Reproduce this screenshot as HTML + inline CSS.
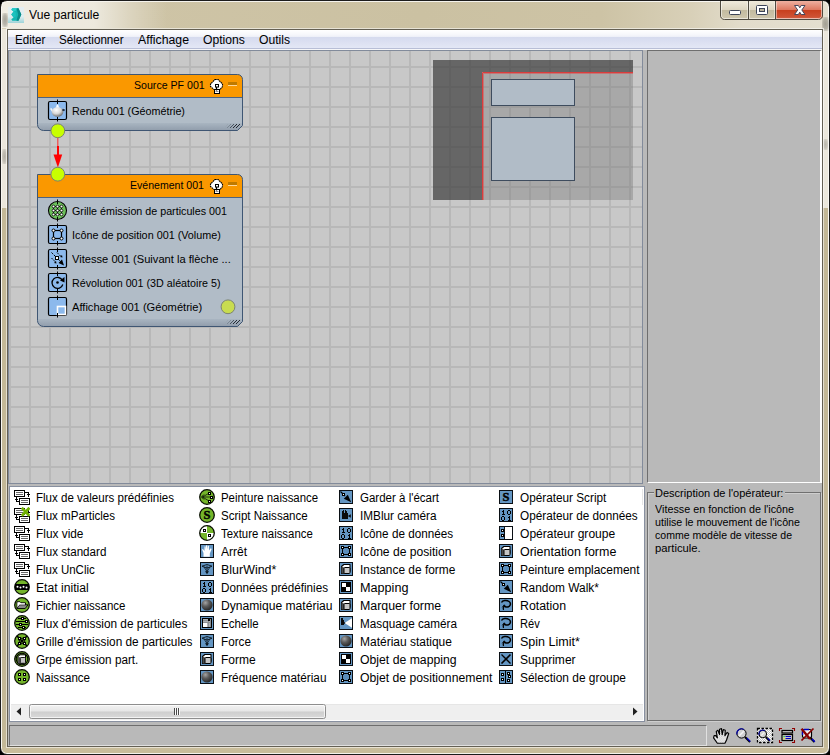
<!DOCTYPE html>
<html lang="fr">
<head>
<meta charset="utf-8">
<title>Vue particule</title>
<style>
html,body{margin:0;padding:0;background:#000;}
body{width:830px;height:755px;position:relative;overflow:hidden;font-family:"Liberation Sans",sans-serif;}
.abs,.t,.ic{position:absolute;}
.t{white-space:pre;line-height:1;transform-origin:0 50%;}
#win{position:absolute;left:0;top:0;width:828px;height:753px;border:1px solid #1c1c1c;border-radius:7px 7px 7px 7px;
 background:linear-gradient(90deg,#d9d1b8 0px,#cec4a6 130px,#cbc1a2 420px,#cdc3a5 600px,#d8d0b8 690px,#e2dccb 740px,#e4dfd0 830px);
 box-shadow:inset 0 0 0 1px rgba(255,255,255,.8);}
#glow{left:2px;top:2px;width:170px;height:26px;background:linear-gradient(90deg,rgba(255,255,255,.6) 0px,rgba(255,255,255,.6) 92px,rgba(255,255,255,.3) 125px,rgba(255,255,255,0) 165px);}
.smudge{background:radial-gradient(ellipse at center,rgba(120,118,108,.6) 0%,rgba(120,118,108,.45) 50%,rgba(120,118,108,0) 100%);}
/* side / bottom frame overlays */
#frL{left:2px;top:29px;width:5px;height:719px;background:linear-gradient(180deg,#ebe7dc 0px,#ebe7dc 179px,#c3b897 179px,#c3b897 100%);}
#frR{left:823px;top:29px;width:5px;height:719px;background:linear-gradient(180deg,#ebe7dc 0px,#ebe7dc 179px,#c3b897 179px,#c3b897 100%);}
#frB{left:2px;top:747px;width:826px;height:6px;background:#c9bd9b;border-radius:0 0 5px 5px;}
#client{left:6px;top:28px;width:816px;height:718px;border:1px solid rgba(255,255,255,.55);}
#client2{left:7px;top:29px;width:814px;height:716px;border:1px solid #646054;background:#b9b9b9;}
#menu{left:8px;top:30px;width:814px;height:20px;background:linear-gradient(180deg,#ffffff 0px,#f5f6fb 5px,#eceff8 7px,#d5daee 7px,#dde1f2 13px,#e3e7f5 18px,#b8bed6 18px,#b8bed6 19px,#f6f6f8 19px);}
#canvas{left:8px;top:50px;width:633px;height:432px;border:1px solid #828b9b;overflow:hidden;
 background-color:#c8c8c8;
 background-image:linear-gradient(90deg,#b8b8b8 2px,transparent 2px),linear-gradient(180deg,#b8b8b8 2px,transparent 2px);
 background-size:20px 20px,20px 20px;background-position:0px 0px,0px 15px;}
#rpanel{left:647px;top:50px;width:172px;height:431px;background:#b9b9b9;border-left:1px solid #6e6e6e;border-top:1px solid #6e6e6e;border-right:2px solid #fff;border-bottom:1px solid #fff;}
#list{left:9px;top:486px;width:634px;height:234px;background:#fff;border:1px solid #8890a0;}
#status{left:9px;top:725px;width:696px;height:19px;background:#b9b9b9;border-left:1px solid #6e6e6e;border-top:1px solid #6e6e6e;border-right:1px solid #e0e0e0;border-bottom:1px solid #e0e0e0;}
#gb1{left:647px;top:492px;width:172px;height:227px;border:1px solid #707070;}
#gb2{left:648px;top:493px;width:172px;height:227px;border:1px solid rgba(255,255,255,.3);}
#lline{left:642px;top:489px;width:1px;height:16px;background:#e6e6e6;}
#gbmask{left:654px;top:490px;width:131px;height:6px;background:#b9b9b9;}
</style>
</head>
<body>
<div id="win"></div>
<div id="glow" class="abs"></div>
<div id="frL" class="abs"></div><div id="frR" class="abs"></div><div id="frB" class="abs"></div>
<div class="abs smudge" style="left:2px;top:13px;width:6px;height:14px"></div><div class="abs smudge" style="left:822px;top:17px;width:7px;height:14px"></div><div class="abs smudge" style="left:2px;top:149px;width:5px;height:15px;opacity:.8"></div><div class="abs smudge" style="left:823px;top:139px;width:5px;height:11px;opacity:.7"></div>
<div id="client" class="abs"></div>
<div id="client2" class="abs"></div>
<div id="menu" class="abs"></div>
<div id="canvas" class="abs"></div>
<div id="rpanel" class="abs"></div>
<div id="list" class="abs"></div>
<div id="status" class="abs"></div><div id="lline" class="abs"></div>
<div id="gb2" class="abs"></div><div id="gb1" class="abs"></div><div id="gbmask" class="abs"></div>
<svg class="abs" style="left:0;top:0" width="830" height="755" viewBox="0 0 830 755"><defs><linearGradient id="band" x1="0" y1="0" x2="0" y2="1"><stop offset="0" stop-color="#a9b5c1"/><stop offset="1" stop-color="#8f9baa"/></linearGradient><radialGradient id="tea" cx="0.4" cy="0.3" r="0.7"><stop offset="0" stop-color="#ffffff"/><stop offset="0.55" stop-color="#d8d8d8"/><stop offset="1" stop-color="#707070"/></radialGradient></defs><path d="M433 60H633V72H482V200H433z" fill="rgba(58,58,58,0.69)"/><rect x="483" y="73" width="150" height="127" fill="rgba(120,120,120,0.40)"/><path d="M482.500 200V72.500H633" fill="none" stroke="#dc3c3c" stroke-width="1"/><path d="M483.500 200V73.500H633" fill="none" stroke="rgba(220,70,70,0.5)" stroke-width="1"/><rect x="491.5" y="79.5" width="83" height="26" fill="#b1bcc7" stroke="#3e4c5e"/><rect x="491.5" y="117.5" width="83" height="63" fill="#b1bcc7" stroke="#3e4c5e"/><clipPath id="cn1"><path d="M37.5 74.5H237.5A5 5 0 0 1 242.5 79.5V125.5L237.5 130.5H43.5A6 6 0 0 1 37.5 124.5Z"/></clipPath><g clip-path="url(#cn1)"><rect x="37" y="74" width="206" height="57" fill="#b1bcc7"/><rect x="37" y="74" width="206" height="23" fill="#fa9800"/><rect x="37" y="97" width="206" height="1" fill="#4d6380"/><rect x="37" y="123" width="206" height="8" fill="url(#band)"/></g><path d="M37.5 74.5H237.5A5 5 0 0 1 242.5 79.5V125.5L237.5 130.5H43.5A6 6 0 0 1 37.5 124.5Z" fill="none" stroke="#3f5673" stroke-width="1"/><path d="M224 128l4 -4" stroke="#9ca8b4" stroke-width="1"/><path d="M227 128l4 -4" stroke="#7c8894" stroke-width="1"/><path d="M230 128l4 -4" stroke="#4a5460" stroke-width="1"/><path d="M233 128l4 -4" stroke="#242a32" stroke-width="1"/><path d="M236 128l4 -4" stroke="#242a32" stroke-width="1"/><g transform="translate(216.5,85)"><path d="M-1.500 -5.500H1.500L6 -1V1.500L3.500 4.500H-2.500L-6 1.500V-1Z" fill="#fff" stroke="#000" stroke-width="1.100" stroke-dasharray="1.700 0.600" stroke-linejoin="round"/><rect x="-2" y="4.500" width="5" height="4" fill="#fff" stroke="#000" stroke-width="1"/><path d="M-1 6.500H2" stroke="#909090" stroke-width="1"/><rect x="-1" y="-0.500" width="3" height="2.500" fill="#fff" stroke="#000" stroke-width="1"/><path d="M0 2V5.500" stroke="#000" stroke-width="1.300"/></g><rect x="228" y="82" width="9" height="3" fill="#c07a00"/><rect x="228" y="85" width="9" height="1" fill="#ffd89a"/><clipPath id="cn2"><path d="M37.5 174.5H237.5A5 5 0 0 1 242.5 179.5V321.5L237.5 326.5H43.5A6 6 0 0 1 37.5 320.5Z"/></clipPath><g clip-path="url(#cn2)"><rect x="37" y="174" width="206" height="153" fill="#b1bcc7"/><rect x="37" y="174" width="206" height="23" fill="#fa9800"/><rect x="37" y="197" width="206" height="1" fill="#4d6380"/><rect x="37" y="319" width="206" height="8" fill="url(#band)"/></g><path d="M37.5 174.5H237.5A5 5 0 0 1 242.5 179.5V321.5L237.5 326.5H43.5A6 6 0 0 1 37.5 320.5Z" fill="none" stroke="#3f5673" stroke-width="1"/><path d="M224 324l4 -4" stroke="#9ca8b4" stroke-width="1"/><path d="M227 324l4 -4" stroke="#7c8894" stroke-width="1"/><path d="M230 324l4 -4" stroke="#4a5460" stroke-width="1"/><path d="M233 324l4 -4" stroke="#242a32" stroke-width="1"/><path d="M236 324l4 -4" stroke="#242a32" stroke-width="1"/><g transform="translate(216.5,185)"><path d="M-1.500 -5.500H1.500L6 -1V1.500L3.500 4.500H-2.500L-6 1.500V-1Z" fill="#fff" stroke="#000" stroke-width="1.100" stroke-dasharray="1.700 0.600" stroke-linejoin="round"/><rect x="-2" y="4.500" width="5" height="4" fill="#fff" stroke="#000" stroke-width="1"/><path d="M-1 6.500H2" stroke="#909090" stroke-width="1"/><rect x="-1" y="-0.500" width="3" height="2.500" fill="#fff" stroke="#000" stroke-width="1"/><path d="M0 2V5.500" stroke="#000" stroke-width="1.300"/></g><rect x="228" y="182" width="9" height="3" fill="#c07a00"/><rect x="228" y="185" width="9" height="1" fill="#ffd89a"/><rect x="57" y="137" width="1.500" height="11" fill="#e86060"/><rect x="57" y="146" width="2" height="10" fill="#ff0000"/><path d="M53.500 154.500H62.200L57.900 167.500z" fill="#ff0000"/><rect x="48.5" y="101.5" width="18" height="18" rx="1.500" fill="#8cb9ec" stroke="#000" stroke-width="1.200"/><g transform="translate(48,101)"><path d="M2.500 7.500C3.500 8 4 9.500 5 11M16.500 8C15 8 15 10 14 11" fill="none" stroke="#f4f4f4" stroke-width="1.600"/><ellipse cx="9.500" cy="11" rx="5.800" ry="4.800" fill="url(#tea)"/><path d="M7.500 6.500L9.500 4L11.500 6.500z" fill="#fff"/><circle cx="9.500" cy="4.500" r="1" fill="#fff"/><circle cx="15.500" cy="9" r="1.300" fill="#25364a"/></g><circle cx="57.5" cy="210.5" r="9" fill="#6cc05c" stroke="#000" stroke-width="1.100"/><path d="M53.5 206.5h8M53.5 210.5h8M53.5 214.5h8M53.5 206.5v8M57.5 206.5v8M61.5 206.5v8" stroke="#000" stroke-width="0.800" fill="none"/><g fill="#fff" stroke="#000" stroke-width="0.750"><circle cx="53.5" cy="206.5" r="1.350"/><circle cx="53.5" cy="210.5" r="1.350"/><circle cx="53.5" cy="214.5" r="1.350"/><circle cx="57.5" cy="206.5" r="1.350"/><circle cx="57.5" cy="210.5" r="1.350"/><circle cx="57.5" cy="214.5" r="1.350"/><circle cx="61.5" cy="206.5" r="1.350"/><circle cx="61.5" cy="210.5" r="1.350"/><circle cx="61.5" cy="214.5" r="1.350"/></g><rect x="48.5" y="225.5" width="18" height="18" rx="1.500" fill="#8cb9ec" stroke="#000" stroke-width="1.200"/><rect x="53.5" y="230.5" width="8" height="8" fill="none" stroke="#000" stroke-width="1.200"/><g fill="#fff" stroke="#000" stroke-width="1"><circle cx="53.5" cy="230.5" r="1.500"/><circle cx="53.5" cy="238.5" r="1.500"/><circle cx="61.5" cy="230.5" r="1.500"/><circle cx="61.5" cy="238.5" r="1.500"/></g><rect x="48.5" y="249.5" width="18" height="18" rx="1.500" fill="#8cb9ec" stroke="#000" stroke-width="1.200"/><g transform="translate(48,249)"><path d="M3.500 3.500L14 14M9 3.500L13 7.500M3.500 9L7.500 13" stroke="#000" stroke-width="1" stroke-dasharray="2 1.200" fill="none"/><path d="M16 16.500L10.500 14L14 10.500z" fill="#000"/><path d="M14.500 8.500l-2.500-.5 2-2zM8.500 14.500l-.5-2.500-2 2z" fill="#000"/><rect x="7.500" y="7.500" width="3" height="3" fill="#fff" stroke="#000" stroke-width="1"/></g><rect x="48.5" y="273.5" width="18" height="18" rx="1.500" fill="#8cb9ec" stroke="#000" stroke-width="1.200"/><g transform="translate(48,273)"><path d="M14.500 7.500A5.500 5.500 0 1 0 14.800 11.500" fill="none" stroke="#000" stroke-width="1.300"/><path d="M12 7.500L16.500 4V9.500z" fill="#000"/><circle cx="9.500" cy="9.500" r="1.300" fill="#000"/></g><rect x="48.5" y="297.5" width="18" height="18" rx="1.500" fill="#8cb9ec" stroke="#000" stroke-width="1.200"/><rect x="57.5" y="306.5" width="8" height="8" fill="none" stroke="#fff" stroke-width="1.600"/><path d="M57.5 99.5V104M57.5 117V121.5" stroke="#000" stroke-width="1"/><path d="M57.5 199.5V204M57.5 217V221.5" stroke="#000" stroke-width="1"/><path d="M57.5 223.5V228M57.5 241V245.5" stroke="#000" stroke-width="1"/><path d="M57.5 247.5V252M57.5 265V269.5" stroke="#000" stroke-width="1"/><path d="M57.5 271.5V276M57.5 289V293.5" stroke="#000" stroke-width="1"/><path d="M57.5 295.5V300M57.5 313V317.5" stroke="#000" stroke-width="1"/><circle cx="57.800" cy="130.800" r="6.900" fill="#c8ff00" stroke="#7c8470" stroke-width="1"/><circle cx="57.800" cy="174.200" r="6.900" fill="#c8ff00" stroke="#7c8470" stroke-width="1"/><circle cx="228" cy="306.800" r="6.900" fill="#c8dc50" stroke="#7c8470" stroke-width="1"/></svg><svg class="abs" style="left:0;top:0" width="830" height="755" viewBox="0 0 830 755"><defs><linearGradient id="btn" x1="0" y1="0" x2="0" y2="1"><stop offset="0" stop-color="#efeadc"/><stop offset="0.45" stop-color="#ddd6c2"/><stop offset="0.5" stop-color="#c3bba0"/><stop offset="1" stop-color="#d0c9b0"/></linearGradient><linearGradient id="cls" x1="0" y1="0" x2="0" y2="1"><stop offset="0" stop-color="#eeb0a0"/><stop offset="0.45" stop-color="#de7a62"/><stop offset="0.5" stop-color="#c8401f"/><stop offset="0.85" stop-color="#cf5335"/><stop offset="1" stop-color="#d98068"/></linearGradient><linearGradient id="appbg" x1="0" y1="0" x2="0" y2="1"><stop offset="0" stop-color="#e4eef2"/><stop offset="0.6" stop-color="#e0eef0"/><stop offset="1" stop-color="#9ed4d8"/></linearGradient><linearGradient id="thumb" x1="0" y1="0" x2="0" y2="1"><stop offset="0" stop-color="#f3f3f3"/><stop offset="0.48" stop-color="#e6e6e6"/><stop offset="0.52" stop-color="#cecece"/><stop offset="1" stop-color="#dadada"/></linearGradient><pattern id="dith" width="2" height="2" patternUnits="userSpaceOnUse"><rect width="2" height="2" fill="#fff"/><rect width="1" height="1" fill="#c0c0c0"/><rect x="1" y="1" width="1" height="1" fill="#c0c0c0"/></pattern><clipPath id="btnclip"><path d="M720 1H823V15A4 4 0 0 1 819 19H724A4 4 0 0 1 720 15Z"/></clipPath></defs><rect x="8" y="7" width="16" height="16" fill="url(#appbg)"/><path d="M12.300 8.200H18.500L21.300 14.500L18.500 20.800H12.300L11.300 19.300L13.600 17.500L11.300 14.500L13.600 11.500L11.300 9.700Z" fill="#14b6b2"/><path d="M16.500 8.200H18.500L21.300 14.500L18.500 20.800H16.500L18.200 14.500Z" fill="#0a8c8a"/><path d="M12.300 8.200H16.500L15.800 10.800L13.600 11.500L11.300 9.700Z" fill="#24ccc8"/><path d="M11.300 14.500L13.600 11.500L15.800 12.500L15.800 16.500L13.600 17.500Z" fill="#1cc2be"/><g clip-path="url(#btnclip)"><rect x="720" y="1" width="56" height="19" fill="url(#btn)"/><rect x="775" y="1" width="48" height="19" fill="url(#cls)"/></g><path d="M720.500 1V15A4 4 0 0 0 724.500 19.500H818.500A4 4 0 0 0 822.500 15V1" fill="none" stroke="#4e4a40" stroke-width="1"/><path d="M721.500 1.500V15A3 3 0 0 0 724.500 18.500H818.500A3 3 0 0 0 821.500 15V1.500" fill="none" stroke="rgba(255,255,255,0.55)" stroke-width="1"/><path d="M748.500 1V19M775.500 1V19" stroke="#4e4a40" stroke-width="1"/><path d="M749.500 2V18M747.500 2V18M776.500 2V18M774.500 2V18" stroke="rgba(255,255,255,0.45)" stroke-width="1"/><rect x="729.500" y="10.500" width="11" height="4" rx="1" fill="#fff" stroke="#3c4458" stroke-width="1"/><rect x="756.500" y="5.500" width="11" height="9" rx="1" fill="#fff" stroke="#3c4458" stroke-width="1"/><rect x="759.500" y="8.500" width="5" height="3" fill="#b9b29a" stroke="#3c4458" stroke-width="1"/><path d="M794.500 5.500H798.400L799.800 7.800L801.200 5.500H805L801.800 10L805 14.500H801.200L799.800 12.200L798.400 14.500H794.500L797.700 10Z" fill="#fff" stroke="#46465a" stroke-width="1" stroke-linejoin="round"/><rect x="11" y="704" width="632" height="16" fill="#efefef"/><rect x="11" y="704" width="632" height="1" fill="#e6e6e6"/><rect x="29.500" y="704.500" width="296" height="14" rx="2" fill="url(#thumb)" stroke="#8e8e8e"/><rect x="30.500" y="705.500" width="294" height="12" rx="1" fill="none" stroke="rgba(255,255,255,0.7)"/><path d="M16.500 711.500L21 707.500V715.500Z" fill="#202020"/><path d="M637.500 711.500L633 707.500V715.500Z" fill="#202020"/><path d="M174.500 708V715M176.500 708V715M178.500 708V715" stroke="#4a4a4a" stroke-width="1"/><path d="M175.500 708V715M177.500 708V715M179.500 708V715" stroke="#fbfbfb" stroke-width="1"/><g transform="translate(712.5,727.6) scale(1.08)"><path d="M4.500 14.500L1 9.500L1.500 7.500L3 7.500L4.500 9.500L3.500 3.500L5 2.500L6.500 6.500V1.500L8.300 1L9 6.500L10 1.800L11.800 2.500L11.500 7.500L13.500 4.500L15 5.500L13 11.500L11.500 14.500Z" fill="url(#dith)" stroke="#000" stroke-width="1.100" stroke-linejoin="round"/></g><g transform="translate(736,728)"><circle cx="5.500" cy="5.500" r="4.600" fill="#d0d0d0" stroke="#000" stroke-width="1"/><path d="M1 6.500A4.600 4.600 0 0 1 8 1.600" fill="none" stroke="#0000a8" stroke-width="1.100"/><path d="M3.300 7.700L7.700 3.300" stroke="#f4f4f4" stroke-width="1.600"/><path d="M9 9L14 14" stroke="#000" stroke-width="2"/><path d="M10.800 10L14.300 13.500" stroke="#0000d0" stroke-width="1.100"/></g><g transform="translate(757,728)"><rect x="0.500" y="0.500" width="15" height="14" fill="url(#dith)" stroke="#000" stroke-width="1.300" stroke-dasharray="2.500 1.500"/><circle cx="5.800" cy="6" r="3.800" fill="#d0d0d0" stroke="#000" stroke-width="1"/><path d="M2.100 7A3.800 3.800 0 0 1 7.800 2.700" fill="none" stroke="#0000a8" stroke-width="1.100"/><path d="M4.200 7.600L7.400 4.400" stroke="#f4f4f4" stroke-width="1.300"/><path d="M8.800 9L12.800 13" stroke="#000" stroke-width="1.900"/><path d="M10.500 10.200L13 12.700" stroke="#0000d0" stroke-width="1.100"/></g><g transform="translate(779,728)"><path d="M0.500 3V0.500H3M13 0.500H15.500V3M0.500 12V14.500H3M13 14.500H15.500V12" fill="none" stroke="#900000" stroke-width="1.100"/><rect x="3" y="2.500" width="10.500" height="2.500" fill="#c8c8c8" stroke="#000" stroke-width="1.200"/><rect x="3" y="6.500" width="10.500" height="6" fill="#c8c8c8" stroke="#000" stroke-width="1.200"/><rect x="4.500" y="8" width="1.200" height="1.200" fill="#00e000"/><rect x="4.500" y="10" width="1.200" height="1.200" fill="#f0f000"/><path d="M6.500 8.500H12M6.500 10.500H12" stroke="#0000c0" stroke-width="1"/></g><g transform="translate(800,728)"><rect x="2.500" y="1.500" width="9" height="8.500" rx="2" fill="#eee" stroke="#000" stroke-width="1.200"/><path d="M2.500 7V3.500A2 2 0 0 1 4.500 1.500H9" fill="none" stroke="#0000c0" stroke-width="1.300"/><path d="M10.500 10L14.500 14" stroke="#000" stroke-width="2.200"/><path d="M12 11L14.800 13.800" stroke="#0000e0" stroke-width="1.300"/><path d="M1.500 0.800L10 11" stroke="#8a0000" stroke-width="2.400"/><path d="M13.500 0.500L1.500 12.500" stroke="#8a0000" stroke-width="1.700"/></g></svg>
<svg class="ic" style="left:14px;top:489px" width="16" height="16" viewBox="0 0 16 16"><g shape-rendering="crispEdges"><rect x="11" y="3" width="4" height="1" fill="#000"/><rect x="14" y="3" width="1" height="3" fill="#000"/><rect x="13" y="5" width="3" height="1" fill="#000"/><rect x="14" y="6" width="1" height="2" fill="#000"/><rect x="2" y="12" width="4" height="1" fill="#000"/><rect x="2" y="10" width="1" height="3" fill="#000"/><rect x="1" y="10" width="3" height="1" fill="#000"/><rect x="2" y="8" width="1" height="2" fill="#000"/><rect x="0" y="1" width="11" height="7" fill="#000"/><rect x="1" y="2" width="9" height="5" fill="#fff"/><rect x="2" y="3" width="7" height="1" fill="#666"/><rect x="2" y="5" width="7" height="1" fill="#666"/><rect x="5" y="9" width="11" height="7" fill="#000"/><rect x="6" y="10" width="9" height="5" fill="#fff"/><rect x="7" y="11" width="7" height="1" fill="#666"/><rect x="7" y="13" width="7" height="1" fill="#666"/></g></svg>
<svg class="ic" style="left:14px;top:507px" width="16" height="16" viewBox="0 0 16 16"><g shape-rendering="crispEdges"><rect x="11" y="3" width="4" height="1" fill="#000"/><rect x="14" y="3" width="1" height="3" fill="#000"/><rect x="13" y="5" width="3" height="1" fill="#000"/><rect x="14" y="6" width="1" height="2" fill="#000"/><rect x="2" y="12" width="4" height="1" fill="#000"/><rect x="2" y="10" width="1" height="3" fill="#000"/><rect x="1" y="10" width="3" height="1" fill="#000"/><rect x="2" y="8" width="1" height="2" fill="#000"/><rect x="0" y="1" width="11" height="7" fill="#000"/><rect x="1" y="2" width="9" height="5" fill="#fff"/><rect x="2" y="3" width="7" height="1" fill="#666"/><rect x="2" y="5" width="7" height="1" fill="#666"/><rect x="5" y="9" width="11" height="7" fill="#000"/><rect x="6" y="10" width="9" height="5" fill="#fff"/><rect x="7" y="11" width="7" height="1" fill="#666"/><rect x="7" y="13" width="7" height="1" fill="#666"/></g><path d="M7.800 0.800L15.400 8.800M15.400 0.800L7.800 8.800" stroke="#70b000" stroke-width="2.700"/></svg>
<svg class="ic" style="left:14px;top:525px" width="16" height="16" viewBox="0 0 16 16"><g shape-rendering="crispEdges"><rect x="11" y="3" width="4" height="1" fill="#000"/><rect x="14" y="3" width="1" height="3" fill="#000"/><rect x="13" y="5" width="3" height="1" fill="#000"/><rect x="14" y="6" width="1" height="2" fill="#000"/><rect x="2" y="12" width="4" height="1" fill="#000"/><rect x="2" y="10" width="1" height="3" fill="#000"/><rect x="1" y="10" width="3" height="1" fill="#000"/><rect x="2" y="8" width="1" height="2" fill="#000"/><rect x="0" y="1" width="11" height="7" fill="#000"/><rect x="1" y="2" width="9" height="5" fill="#fff"/><rect x="2" y="3" width="7" height="1" fill="#666"/><rect x="2" y="5" width="7" height="1" fill="#666"/><rect x="5" y="9" width="11" height="7" fill="#000"/><rect x="6" y="10" width="9" height="5" fill="#fff"/><rect x="7" y="11" width="7" height="1" fill="#666"/><rect x="7" y="13" width="7" height="1" fill="#666"/></g></svg>
<svg class="ic" style="left:14px;top:543px" width="16" height="16" viewBox="0 0 16 16"><g shape-rendering="crispEdges"><rect x="11" y="3" width="4" height="1" fill="#000"/><rect x="14" y="3" width="1" height="3" fill="#000"/><rect x="13" y="5" width="3" height="1" fill="#000"/><rect x="14" y="6" width="1" height="2" fill="#000"/><rect x="2" y="12" width="4" height="1" fill="#000"/><rect x="2" y="10" width="1" height="3" fill="#000"/><rect x="1" y="10" width="3" height="1" fill="#000"/><rect x="2" y="8" width="1" height="2" fill="#000"/><rect x="0" y="1" width="11" height="7" fill="#000"/><rect x="1" y="2" width="9" height="5" fill="#fff"/><rect x="2" y="3" width="7" height="1" fill="#666"/><rect x="2" y="5" width="7" height="1" fill="#666"/><rect x="5" y="9" width="11" height="7" fill="#000"/><rect x="6" y="10" width="9" height="5" fill="#fff"/><rect x="7" y="11" width="7" height="1" fill="#666"/><rect x="7" y="13" width="7" height="1" fill="#666"/></g></svg>
<svg class="ic" style="left:14px;top:561px" width="16" height="16" viewBox="0 0 16 16"><g shape-rendering="crispEdges"><rect x="11" y="3" width="4" height="1" fill="#000"/><rect x="14" y="3" width="1" height="3" fill="#000"/><rect x="13" y="5" width="3" height="1" fill="#000"/><rect x="14" y="6" width="1" height="2" fill="#000"/><rect x="2" y="12" width="4" height="1" fill="#000"/><rect x="2" y="10" width="1" height="3" fill="#000"/><rect x="1" y="10" width="3" height="1" fill="#000"/><rect x="2" y="8" width="1" height="2" fill="#000"/><rect x="0" y="1" width="11" height="7" fill="#000"/><rect x="1" y="2" width="9" height="5" fill="#fff"/><rect x="2" y="3" width="7" height="1" fill="#666"/><rect x="2" y="5" width="7" height="1" fill="#666"/><rect x="5" y="9" width="11" height="7" fill="#000"/><rect x="6" y="10" width="9" height="5" fill="#fff"/><rect x="7" y="11" width="7" height="1" fill="#666"/><rect x="7" y="13" width="7" height="1" fill="#666"/></g></svg>
<svg class="ic" style="left:14px;top:579px" width="16" height="16" viewBox="0 0 16 16"><circle cx="8" cy="8" r="7.3" fill="#74b52a" stroke="#0a1004" stroke-width="1.3"/><g shape-rendering="crispEdges"><rect x="1" y="5" width="14" height="1" fill="#000"/><rect x="1" y="10" width="14" height="1" fill="#000"/><rect x="1" y="6" width="14" height="4" fill="#000"/></g><g fill="#fff"><circle cx="3.500" cy="7.700" r="1"/><circle cx="6.500" cy="8.600" r="1"/><circle cx="9.500" cy="7.700" r="1"/><circle cx="12.500" cy="8.600" r="1"/></g></svg>
<svg class="ic" style="left:14px;top:597px" width="16" height="16" viewBox="0 0 16 16"><circle cx="8" cy="8" r="7.3" fill="#74b52a" stroke="#0a1004" stroke-width="1.3"/><path d="M3 11.500V4.800H6L7 5.800H11.500V8" fill="#fff" stroke="#000" stroke-width="1"/><path d="M3 11.500L5.500 7.800H14L11.200 11.500z" fill="#8a8a8a" stroke="#000" stroke-width="0.900" stroke-linejoin="round"/><path d="M3.600 10.300V5.500H5.800L6.800 6.500H10.900V7.500H5.300z" fill="#fff"/></svg>
<svg class="ic" style="left:14px;top:615px" width="16" height="16" viewBox="0 0 16 16"><circle cx="8" cy="8" r="7.3" fill="#74b52a" stroke="#0a1004" stroke-width="1.3"/><g shape-rendering="crispEdges"><rect x="4" y="3" width="8" height="1" fill="#000"/><rect x="2" y="6" width="12" height="1" fill="#000"/><rect x="2" y="9" width="12" height="1" fill="#000"/><rect x="4" y="12" width="8" height="1" fill="#000"/><rect x="7" y="2" width="3" height="3" fill="#000"/><rect x="8" y="3" width="1" height="1" fill="#fff"/><rect x="11" y="5" width="3" height="3" fill="#000"/><rect x="12" y="6" width="1" height="1" fill="#fff"/><rect x="5" y="8" width="3" height="3" fill="#000"/><rect x="6" y="9" width="1" height="1" fill="#fff"/><rect x="8" y="11" width="3" height="3" fill="#000"/><rect x="9" y="12" width="1" height="1" fill="#fff"/></g></svg>
<svg class="ic" style="left:14px;top:633px" width="16" height="16" viewBox="0 0 16 16"><circle cx="8" cy="8" r="7.3" fill="#74b52a" stroke="#0a1004" stroke-width="1.3"/><path d="M3 3L13 13M13 3L3 13" stroke="#000" stroke-width="1.500"/><path d="M8 4.800L11.200 8L8 11.200L4.800 8z" fill="none" stroke="#000" stroke-width="1"/><g shape-rendering="crispEdges"><rect x="4" y="4" width="3" height="3" fill="#000"/><rect x="5" y="5" width="1" height="1" fill="#fff"/><rect x="9" y="4" width="3" height="3" fill="#000"/><rect x="10" y="5" width="1" height="1" fill="#fff"/><rect x="4" y="9" width="3" height="3" fill="#000"/><rect x="5" y="10" width="1" height="1" fill="#fff"/><rect x="9" y="9" width="3" height="3" fill="#000"/><rect x="10" y="10" width="1" height="1" fill="#fff"/></g></svg>
<svg class="ic" style="left:14px;top:651px" width="16" height="16" viewBox="0 0 16 16"><circle cx="8" cy="8" r="7.3" fill="#74b52a" stroke="#0a1004" stroke-width="1.3"/><circle cx="8" cy="8" r="5.800" fill="none" stroke="#000" stroke-width="1.100"/><path d="M4 5.500L6 3.800H11.500V10L9.800 12.300H4z" fill="#fff" stroke="#000" stroke-width="1" stroke-linejoin="round"/><path d="M4 5.500L6.300 6.500V12.300H4z" fill="#555"/><rect x="6.300" y="6.500" width="5.200" height="5.800" rx="0.800" fill="#c4c4c4" stroke="#000" stroke-width="0.900"/></svg>
<svg class="ic" style="left:14px;top:669px" width="16" height="16" viewBox="0 0 16 16"><circle cx="8" cy="8" r="7.3" fill="#74b52a" stroke="#0a1004" stroke-width="1.3"/><g shape-rendering="crispEdges"><rect x="4" y="4" width="3" height="3" fill="#000"/><rect x="5" y="5" width="1" height="1" fill="#fff"/><rect x="9" y="4" width="3" height="3" fill="#000"/><rect x="10" y="5" width="1" height="1" fill="#fff"/><rect x="4" y="9" width="3" height="3" fill="#000"/><rect x="5" y="10" width="1" height="1" fill="#fff"/><rect x="9" y="9" width="3" height="3" fill="#000"/><rect x="10" y="10" width="1" height="1" fill="#fff"/></g></svg>
<svg class="ic" style="left:199px;top:489px" width="16" height="16" viewBox="0 0 16 16"><circle cx="8" cy="8" r="7.3" fill="#74b52a" stroke="#0a1004" stroke-width="1.3"/><path d="M3.500 8L9.500 4.500M3.500 8H11.500M3.500 8L10 12" stroke="#000" stroke-width="0.700" fill="none"/><path d="M2.500 8L5 5.500M2.500 8L5 10.500" stroke="#000" stroke-width="0.900" fill="none"/><g shape-rendering="crispEdges"><rect x="9" y="3" width="3" height="3" fill="#000"/><rect x="10" y="4" width="1" height="1" fill="#fff"/><rect x="11" y="7" width="3" height="3" fill="#000"/><rect x="12" y="8" width="1" height="1" fill="#fff"/><rect x="9" y="11" width="3" height="3" fill="#000"/><rect x="10" y="12" width="1" height="1" fill="#fff"/></g></svg>
<svg class="ic" style="left:199px;top:507px" width="16" height="16" viewBox="0 0 16 16"><circle cx="8" cy="8" r="7.3" fill="#74b52a" stroke="#0a1004" stroke-width="1.3"/><text x="8" y="12.300" text-anchor="middle" style="font:bold 12.500px 'Liberation Serif',serif" fill="#000" stroke="#000" stroke-width="0.450">S</text></svg>
<svg class="ic" style="left:199px;top:525px" width="16" height="16" viewBox="0 0 16 16"><circle cx="8" cy="8" r="7.300" fill="#fff"/><path d="M8 8V0.700A7.300 7.300 0 0 1 15.300 8zM8 8V15.300A7.300 7.300 0 0 1 0.700 8z" fill="#74b52a"/><circle cx="8" cy="8" r="7.300" fill="none" stroke="#0a1004" stroke-width="1.300"/><g shape-rendering="crispEdges"><rect x="4" y="4" width="3" height="3" fill="#000"/><rect x="5" y="5" width="1" height="1" fill="#fff"/><rect x="9" y="9" width="3" height="3" fill="#000"/><rect x="10" y="10" width="1" height="1" fill="#fff"/></g></svg>
<svg class="ic" style="left:199px;top:543px" width="16" height="16" viewBox="0 0 16 16"><g shape-rendering="crispEdges"><rect x="1" y="1" width="14" height="14" fill="#0a0f14"/><rect x="2" y="2" width="12" height="12" fill="#6496c3"/></g><path d="M4.500 13.800V10L3 6.500l.9-.5L5.500 8V3.600l1-.3.500 3V2.400l1.100-.2.400 4 .4-3.500 1 .1.100 4.700 1.700-2.200 1 .6L10.800 10.500V13.800z" fill="#fff"/></svg>
<svg class="ic" style="left:199px;top:561px" width="16" height="16" viewBox="0 0 16 16"><g shape-rendering="crispEdges"><rect x="1" y="1" width="14" height="14" fill="#0a0f14"/><rect x="2" y="2" width="12" height="12" fill="#6496c3"/></g><path d="M3 5.200L8 3.500L13 5.200L8 7z" fill="none" stroke="#0a141c" stroke-width="0.900"/><path d="M5 6L8 10.500L11 6M8 4.500V11" fill="none" stroke="#0a141c" stroke-width="0.800"/><path d="M6 10.300H10L8 13.300z" fill="#0a141c"/></svg>
<svg class="ic" style="left:199px;top:579px" width="16" height="16" viewBox="0 0 16 16"><g shape-rendering="crispEdges"><rect x="1" y="1" width="14" height="14" fill="#0a0f14"/><rect x="2" y="2" width="12" height="12" fill="#6496c3"/></g><g shape-rendering="crispEdges"><rect x="5" y="3" width="1" height="4" fill="#000"/><rect x="4" y="4" width="1" height="1" fill="#000"/><rect x="4" y="7" width="3" height="1" fill="#000"/><rect x="10" y="3" width="2" height="1" fill="#000"/><rect x="10" y="7" width="2" height="1" fill="#000"/><rect x="9" y="4" width="1" height="3" fill="#000"/><rect x="12" y="4" width="1" height="3" fill="#000"/><rect x="4" y="9" width="2" height="1" fill="#000"/><rect x="4" y="13" width="2" height="1" fill="#000"/><rect x="3" y="10" width="1" height="3" fill="#000"/><rect x="6" y="10" width="1" height="3" fill="#000"/><rect x="11" y="9" width="1" height="4" fill="#000"/><rect x="10" y="10" width="1" height="1" fill="#000"/><rect x="10" y="13" width="3" height="1" fill="#000"/></g></svg>
<svg class="ic" style="left:199px;top:597px" width="16" height="16" viewBox="0 0 16 16"><defs><radialGradient id="sg1" cx="0.36" cy="0.3" r="0.72"><stop offset="0" stop-color="#a4a4a4"/><stop offset="0.45" stop-color="#5c5c5c"/><stop offset="1" stop-color="#262626"/></radialGradient></defs><g shape-rendering="crispEdges"><rect x="1" y="1" width="14" height="14" fill="#0a0f14"/><rect x="2" y="2" width="12" height="12" fill="#6496c3"/></g><circle cx="8" cy="8" r="5.600" fill="url(#sg1)"/></svg>
<svg class="ic" style="left:199px;top:615px" width="16" height="16" viewBox="0 0 16 16"><g shape-rendering="crispEdges"><rect x="1" y="1" width="14" height="14" fill="#0a0f14"/><rect x="2" y="2" width="12" height="12" fill="#6496c3"/></g><g shape-rendering="crispEdges"><rect x="3" y="3" width="10" height="10" fill="#000"/><rect x="4" y="4" width="8" height="8" fill="#aeb2b6"/><rect x="4" y="5" width="8" height="1" fill="#8c9094"/><rect x="4" y="7" width="8" height="1" fill="#8c9094"/><rect x="9" y="4" width="1" height="8" fill="#8c9094"/><rect x="11" y="4" width="1" height="8" fill="#8c9094"/><rect x="4" y="8" width="4" height="4" fill="#fff"/><rect x="9" y="4" width="2" height="2" fill="#000"/></g></svg>
<svg class="ic" style="left:199px;top:633px" width="16" height="16" viewBox="0 0 16 16"><g shape-rendering="crispEdges"><rect x="1" y="1" width="14" height="14" fill="#0a0f14"/><rect x="2" y="2" width="12" height="12" fill="#6496c3"/></g><path d="M3 5.200L8 3.500L13 5.200L8 7z" fill="none" stroke="#0a141c" stroke-width="0.900"/><path d="M5 6L8 10.500L11 6M8 4.500V11" fill="none" stroke="#0a141c" stroke-width="0.800"/><path d="M6 10.300H10L8 13.300z" fill="#0a141c"/></svg>
<svg class="ic" style="left:199px;top:651px" width="16" height="16" viewBox="0 0 16 16"><g shape-rendering="crispEdges"><rect x="1" y="1" width="14" height="14" fill="#0a0f14"/><rect x="2" y="2" width="12" height="12" fill="#6496c3"/></g><path d="M3.500 5.500L5.800 3.500H12V10.200L10 12.500H3.500z" fill="#fff" stroke="#000" stroke-width="1.100" stroke-linejoin="round"/><path d="M3.500 5.500L6 6.500V12.500H3.500z" fill="#4c4c4c"/><rect x="6" y="6.500" width="6" height="6" rx="1" fill="#c6c6c6" stroke="#000" stroke-width="1"/></svg>
<svg class="ic" style="left:199px;top:669px" width="16" height="16" viewBox="0 0 16 16"><defs><radialGradient id="sg2" cx="0.36" cy="0.3" r="0.72"><stop offset="0" stop-color="#a4a4a4"/><stop offset="0.45" stop-color="#5c5c5c"/><stop offset="1" stop-color="#262626"/></radialGradient></defs><g shape-rendering="crispEdges"><rect x="1" y="1" width="14" height="14" fill="#0a0f14"/><rect x="2" y="2" width="12" height="12" fill="#6496c3"/></g><circle cx="8" cy="8" r="5.600" fill="url(#sg2)"/></svg>
<svg class="ic" style="left:338px;top:489px" width="16" height="16" viewBox="0 0 16 16"><g shape-rendering="crispEdges"><rect x="1" y="1" width="14" height="14" fill="#0a0f14"/><rect x="2" y="2" width="12" height="12" fill="#6496c3"/></g><path d="M2.500 2.500L7 7" stroke="#000" stroke-width="1.100"/><path d="M13.200 13.200L5.800 9.800L9.800 5.800z" fill="#000"/><g shape-rendering="crispEdges"><rect x="4" y="4" width="3" height="3" fill="#000"/><rect x="5" y="5" width="1" height="1" fill="#fff"/></g></svg>
<svg class="ic" style="left:338px;top:507px" width="16" height="16" viewBox="0 0 16 16"><g shape-rendering="crispEdges"><rect x="1" y="1" width="14" height="14" fill="#0a0f14"/><rect x="2" y="2" width="12" height="12" fill="#6496c3"/></g><g shape-rendering="crispEdges"><rect x="4" y="6" width="6" height="6" fill="#0a0a0a"/><rect x="4" y="4" width="2" height="2" fill="#0a0a0a"/><rect x="7" y="4" width="2" height="2" fill="#0a0a0a"/><rect x="5" y="3" width="1" height="1" fill="#0a0a0a"/><rect x="7" y="3" width="1" height="1" fill="#0a0a0a"/></g><path d="M9.800 9L12.800 7.200V10.800z" fill="#0a0a0a"/></svg>
<svg class="ic" style="left:338px;top:525px" width="16" height="16" viewBox="0 0 16 16"><g shape-rendering="crispEdges"><rect x="1" y="1" width="14" height="14" fill="#0a0f14"/><rect x="2" y="2" width="12" height="12" fill="#6496c3"/></g><g shape-rendering="crispEdges"><rect x="5" y="3" width="1" height="4" fill="#000"/><rect x="4" y="4" width="1" height="1" fill="#000"/><rect x="4" y="7" width="3" height="1" fill="#000"/><rect x="10" y="3" width="2" height="1" fill="#000"/><rect x="10" y="7" width="2" height="1" fill="#000"/><rect x="9" y="4" width="1" height="3" fill="#000"/><rect x="12" y="4" width="1" height="3" fill="#000"/><rect x="4" y="9" width="2" height="1" fill="#000"/><rect x="4" y="13" width="2" height="1" fill="#000"/><rect x="3" y="10" width="1" height="3" fill="#000"/><rect x="6" y="10" width="1" height="3" fill="#000"/><rect x="11" y="9" width="1" height="4" fill="#000"/><rect x="10" y="10" width="1" height="1" fill="#000"/><rect x="10" y="13" width="3" height="1" fill="#000"/></g></svg>
<svg class="ic" style="left:338px;top:543px" width="16" height="16" viewBox="0 0 16 16"><g shape-rendering="crispEdges"><rect x="1" y="1" width="14" height="14" fill="#0a0f14"/><rect x="2" y="2" width="12" height="12" fill="#6496c3"/></g><g shape-rendering="crispEdges"><rect x="4" y="4" width="8" height="8" fill="#000"/><rect x="5" y="5" width="6" height="6" fill="#5a8cba"/><rect x="3" y="3" width="3" height="3" fill="#000"/><rect x="4" y="4" width="1" height="1" fill="#fff"/><rect x="10" y="3" width="3" height="3" fill="#000"/><rect x="11" y="4" width="1" height="1" fill="#fff"/><rect x="3" y="10" width="3" height="3" fill="#000"/><rect x="4" y="11" width="1" height="1" fill="#fff"/><rect x="10" y="10" width="3" height="3" fill="#000"/><rect x="11" y="11" width="1" height="1" fill="#fff"/></g></svg>
<svg class="ic" style="left:338px;top:561px" width="16" height="16" viewBox="0 0 16 16"><g shape-rendering="crispEdges"><rect x="1" y="1" width="14" height="14" fill="#0a0f14"/><rect x="2" y="2" width="12" height="12" fill="#6496c3"/></g><path d="M3.500 5.500L5.800 3.500H12V10.200L10 12.500H3.500z" fill="#fff" stroke="#000" stroke-width="1.100" stroke-linejoin="round"/><path d="M3.500 5.500L6 6.500V12.500H3.500z" fill="#4c4c4c"/><rect x="6" y="6.500" width="6" height="6" rx="1" fill="#c6c6c6" stroke="#000" stroke-width="1"/></svg>
<svg class="ic" style="left:338px;top:579px" width="16" height="16" viewBox="0 0 16 16"><g shape-rendering="crispEdges"><rect x="1" y="1" width="14" height="14" fill="#0a0f14"/><rect x="2" y="2" width="12" height="12" fill="#6496c3"/></g><g shape-rendering="crispEdges"><rect x="3" y="3" width="10" height="10" fill="#000"/><rect x="4" y="4" width="4" height="4" fill="#fff"/><rect x="8" y="8" width="4" height="4" fill="#fff"/></g></svg>
<svg class="ic" style="left:338px;top:597px" width="16" height="16" viewBox="0 0 16 16"><g shape-rendering="crispEdges"><rect x="1" y="1" width="14" height="14" fill="#0a0f14"/><rect x="2" y="2" width="12" height="12" fill="#6496c3"/></g><path d="M3.500 5.500L5.800 3.500H12V10.200L10 12.500H3.500z" fill="#fff" stroke="#000" stroke-width="1.100" stroke-linejoin="round"/><path d="M3.500 5.500L6 6.500V12.500H3.500z" fill="#4c4c4c"/><rect x="6" y="6.500" width="6" height="6" rx="1" fill="#c6c6c6" stroke="#000" stroke-width="1"/></svg>
<svg class="ic" style="left:338px;top:615px" width="16" height="16" viewBox="0 0 16 16"><g shape-rendering="crispEdges"><rect x="1" y="1" width="14" height="14" fill="#0a0f14"/><rect x="2" y="2" width="12" height="12" fill="#6496c3"/></g><path d="M6.500 8L14 3.200V12.800z" fill="#fff"/><g shape-rendering="crispEdges"><rect x="3" y="5" width="3" height="5" fill="#0a0a0a"/><rect x="3" y="3" width="2" height="2" fill="#0a0a0a"/></g><path d="M5.800 6.800L7.500 8L5.800 9.200z" fill="#0a0a0a"/></svg>
<svg class="ic" style="left:338px;top:633px" width="16" height="16" viewBox="0 0 16 16"><defs><radialGradient id="sg3" cx="0.36" cy="0.3" r="0.72"><stop offset="0" stop-color="#a4a4a4"/><stop offset="0.45" stop-color="#5c5c5c"/><stop offset="1" stop-color="#262626"/></radialGradient></defs><g shape-rendering="crispEdges"><rect x="1" y="1" width="14" height="14" fill="#0a0f14"/><rect x="2" y="2" width="12" height="12" fill="#6496c3"/></g><circle cx="8" cy="8" r="5.600" fill="url(#sg3)"/></svg>
<svg class="ic" style="left:338px;top:651px" width="16" height="16" viewBox="0 0 16 16"><g shape-rendering="crispEdges"><rect x="1" y="1" width="14" height="14" fill="#0a0f14"/><rect x="2" y="2" width="12" height="12" fill="#6496c3"/></g><g shape-rendering="crispEdges"><rect x="3" y="3" width="10" height="10" fill="#000"/><rect x="4" y="4" width="4" height="4" fill="#fff"/><rect x="8" y="8" width="4" height="4" fill="#fff"/></g></svg>
<svg class="ic" style="left:338px;top:669px" width="16" height="16" viewBox="0 0 16 16"><g shape-rendering="crispEdges"><rect x="1" y="1" width="14" height="14" fill="#0a0f14"/><rect x="2" y="2" width="12" height="12" fill="#6496c3"/></g><g shape-rendering="crispEdges"><rect x="4" y="4" width="8" height="8" fill="#000"/><rect x="5" y="5" width="6" height="6" fill="#5a8cba"/><rect x="3" y="3" width="3" height="3" fill="#000"/><rect x="4" y="4" width="1" height="1" fill="#fff"/><rect x="10" y="3" width="3" height="3" fill="#000"/><rect x="11" y="4" width="1" height="1" fill="#fff"/><rect x="3" y="10" width="3" height="3" fill="#000"/><rect x="4" y="11" width="1" height="1" fill="#fff"/><rect x="10" y="10" width="3" height="3" fill="#000"/><rect x="11" y="11" width="1" height="1" fill="#fff"/></g></svg>
<svg class="ic" style="left:498px;top:489px" width="16" height="16" viewBox="0 0 16 16"><g shape-rendering="crispEdges"><rect x="1" y="1" width="14" height="14" fill="#0a0f14"/><rect x="2" y="2" width="12" height="12" fill="#6496c3"/></g><text x="8" y="12.200" text-anchor="middle" style="font:bold 12.500px 'Liberation Serif',serif" fill="#000" stroke="#000" stroke-width="0.450">S</text></svg>
<svg class="ic" style="left:498px;top:507px" width="16" height="16" viewBox="0 0 16 16"><g shape-rendering="crispEdges"><rect x="1" y="1" width="14" height="14" fill="#0a0f14"/><rect x="2" y="2" width="12" height="12" fill="#6496c3"/></g><g shape-rendering="crispEdges"><rect x="5" y="3" width="1" height="4" fill="#000"/><rect x="4" y="4" width="1" height="1" fill="#000"/><rect x="4" y="7" width="3" height="1" fill="#000"/><rect x="10" y="3" width="2" height="1" fill="#000"/><rect x="10" y="7" width="2" height="1" fill="#000"/><rect x="9" y="4" width="1" height="3" fill="#000"/><rect x="12" y="4" width="1" height="3" fill="#000"/><rect x="4" y="9" width="2" height="1" fill="#000"/><rect x="4" y="13" width="2" height="1" fill="#000"/><rect x="3" y="10" width="1" height="3" fill="#000"/><rect x="6" y="10" width="1" height="3" fill="#000"/><rect x="11" y="9" width="1" height="4" fill="#000"/><rect x="10" y="10" width="1" height="1" fill="#000"/><rect x="10" y="13" width="3" height="1" fill="#000"/></g></svg>
<svg class="ic" style="left:498px;top:525px" width="16" height="16" viewBox="0 0 16 16"><g shape-rendering="crispEdges"><rect x="1" y="1" width="14" height="14" fill="#0a0f14"/><rect x="2" y="2" width="4" height="12" fill="#6496c3"/><rect x="7" y="2" width="7" height="12" fill="#fff"/><rect x="3" y="4" width="3" height="3" fill="#000"/><rect x="4" y="5" width="1" height="1" fill="#fff"/><rect x="3" y="9" width="3" height="3" fill="#000"/><rect x="4" y="10" width="1" height="1" fill="#fff"/></g></svg>
<svg class="ic" style="left:498px;top:543px" width="16" height="16" viewBox="0 0 16 16"><g shape-rendering="crispEdges"><rect x="1" y="1" width="14" height="14" fill="#0a0f14"/><rect x="2" y="2" width="12" height="12" fill="#6496c3"/></g><path d="M3.500 5.500L5.800 3.500H12V10.200L10 12.500H3.500z" fill="#fff" stroke="#000" stroke-width="1.100" stroke-linejoin="round"/><path d="M3.500 5.500L6 6.500V12.500H3.500z" fill="#4c4c4c"/><rect x="6" y="6.500" width="6" height="6" rx="1" fill="#c6c6c6" stroke="#000" stroke-width="1"/></svg>
<svg class="ic" style="left:498px;top:561px" width="16" height="16" viewBox="0 0 16 16"><g shape-rendering="crispEdges"><rect x="1" y="1" width="14" height="14" fill="#0a0f14"/><rect x="2" y="2" width="12" height="12" fill="#6496c3"/></g><g shape-rendering="crispEdges"><rect x="4" y="4" width="8" height="8" fill="#000"/><rect x="5" y="5" width="6" height="6" fill="#5a8cba"/><rect x="3" y="3" width="3" height="3" fill="#000"/><rect x="4" y="4" width="1" height="1" fill="#fff"/><rect x="10" y="3" width="3" height="3" fill="#000"/><rect x="11" y="4" width="1" height="1" fill="#fff"/><rect x="3" y="10" width="3" height="3" fill="#000"/><rect x="4" y="11" width="1" height="1" fill="#fff"/><rect x="10" y="10" width="3" height="3" fill="#000"/><rect x="11" y="11" width="1" height="1" fill="#fff"/></g></svg>
<svg class="ic" style="left:498px;top:579px" width="16" height="16" viewBox="0 0 16 16"><g shape-rendering="crispEdges"><rect x="1" y="1" width="14" height="14" fill="#0a0f14"/><rect x="2" y="2" width="12" height="12" fill="#6496c3"/></g><path d="M2.500 2.500L7 7" stroke="#000" stroke-width="1.100"/><path d="M13.200 13.200L5.800 9.800L9.800 5.800z" fill="#000"/><g shape-rendering="crispEdges"><rect x="4" y="4" width="3" height="3" fill="#000"/><rect x="5" y="5" width="1" height="1" fill="#fff"/></g></svg>
<svg class="ic" style="left:498px;top:597px" width="16" height="16" viewBox="0 0 16 16"><g shape-rendering="crispEdges"><rect x="1" y="1" width="14" height="14" fill="#0a0f14"/><rect x="2" y="2" width="12" height="12" fill="#6496c3"/></g><path d="M3.500 5.500C4.500 3.500 8.500 2.800 11 4.500C13.500 6.200 12.500 9.500 9.500 10C8 10.200 6.500 9.500 6 8.800" fill="none" stroke="#000" stroke-width="1.500"/><path d="M5.500 13C5 11.500 5.300 9.800 6.200 8.500" fill="none" stroke="#000" stroke-width="1.200"/><path d="M4.300 10.300L6.300 7.800L7.800 10.200" fill="none" stroke="#000" stroke-width="1"/></svg>
<svg class="ic" style="left:498px;top:615px" width="16" height="16" viewBox="0 0 16 16"><g shape-rendering="crispEdges"><rect x="1" y="1" width="14" height="14" fill="#0a0f14"/><rect x="2" y="2" width="12" height="12" fill="#6496c3"/></g><path d="M3.500 5.500C4.500 3.500 8.500 2.800 11 4.500C13.500 6.200 12.500 9.500 9.500 10C8 10.200 6.500 9.500 6 8.800" fill="none" stroke="#000" stroke-width="1.500"/><path d="M5.500 13C5 11.500 5.300 9.800 6.200 8.500" fill="none" stroke="#000" stroke-width="1.200"/><path d="M4.300 10.300L6.300 7.800L7.800 10.200" fill="none" stroke="#000" stroke-width="1"/></svg>
<svg class="ic" style="left:498px;top:633px" width="16" height="16" viewBox="0 0 16 16"><g shape-rendering="crispEdges"><rect x="1" y="1" width="14" height="14" fill="#0a0f14"/><rect x="2" y="2" width="12" height="12" fill="#6496c3"/></g><path d="M3.500 5.500C4.500 3.500 8.500 2.800 11 4.500C13.500 6.200 12.500 9.500 9.500 10C8 10.200 6.500 9.500 6 8.800" fill="none" stroke="#000" stroke-width="1.500"/><path d="M5.500 13C5 11.500 5.300 9.800 6.200 8.500" fill="none" stroke="#000" stroke-width="1.200"/><path d="M4.300 10.300L6.300 7.800L7.800 10.200" fill="none" stroke="#000" stroke-width="1"/></svg>
<svg class="ic" style="left:498px;top:651px" width="16" height="16" viewBox="0 0 16 16"><g shape-rendering="crispEdges"><rect x="1" y="1" width="14" height="14" fill="#0a0f14"/><rect x="2" y="2" width="12" height="12" fill="#6496c3"/></g><path d="M3.500 3.500L12.500 12.500" stroke="#000" stroke-width="1.300"/><path d="M12.500 3.500L3.500 12.500" stroke="#000" stroke-width="1.700"/></svg>
<svg class="ic" style="left:498px;top:669px" width="16" height="16" viewBox="0 0 16 16"><g shape-rendering="crispEdges"><rect x="1" y="1" width="14" height="14" fill="#0a0f14"/><rect x="2" y="2" width="12" height="12" fill="#6496c3"/></g><g shape-rendering="crispEdges"><rect x="7" y="2" width="1" height="12" fill="#000"/><rect x="3" y="4" width="3" height="3" fill="#000"/><rect x="4" y="5" width="1" height="1" fill="#fff"/><rect x="3" y="9" width="3" height="3" fill="#000"/><rect x="4" y="10" width="1" height="1" fill="#fff"/><rect x="9" y="3" width="3" height="3" fill="#000"/><rect x="10" y="4" width="1" height="1" fill="#fff"/><rect x="10" y="6" width="3" height="3" fill="#000"/><rect x="11" y="7" width="1" height="1" fill="#fff"/><rect x="9" y="10" width="3" height="3" fill="#000"/><rect x="10" y="11" width="1" height="1" fill="#fff"/></g></svg>
<span class="t" style="left:29.30px;top:9px;font-size:12px;transform:scaleX(1.0101);color:#000">Vue particule</span>
<span class="t" style="left:14.53px;top:34px;font-size:12px;transform:scaleX(0.9700);color:#000">Editer</span>
<span class="t" style="left:58.63px;top:34px;font-size:12px;transform:scaleX(0.9697);color:#000">Sélectionner</span>
<span class="t" style="left:138.30px;top:34px;font-size:12px;transform:scaleX(1.0245);color:#000">Affichage</span>
<span class="t" style="left:203.49px;top:34px;font-size:12px;transform:scaleX(1.0125);color:#000">Options</span>
<span class="t" style="left:259.39px;top:34px;font-size:12px;transform:scaleX(1.0138);color:#000">Outils</span>
<span class="t" style="left:133.84px;top:80px;font-size:11px;transform:scaleX(0.9639);color:#000">Source PF 001</span>
<span class="t" style="left:130.34px;top:180px;font-size:11px;transform:scaleX(0.9592);color:#000">Evénement 001</span>
<span class="t" style="left:71.90px;top:106px;font-size:11px;transform:scaleX(0.9774);color:#000">Rendu 001 (Géométrie)</span>
<span class="t" style="left:71.90px;top:206px;font-size:11px;transform:scaleX(0.9747);color:#000">Grille émission de particules 001</span>
<span class="t" style="left:71.90px;top:230px;font-size:11px;transform:scaleX(0.9815);color:#000">Icône de position 001 (Volume)</span>
<span class="t" style="left:71.90px;top:254px;font-size:11px;transform:scaleX(1.0115);color:#000">Vitesse 001 (Suivant la flèche ...</span>
<span class="t" style="left:71.90px;top:278px;font-size:11px;transform:scaleX(0.9750);color:#000">Révolution 001 (3D aléatoire 5)</span>
<span class="t" style="left:71.90px;top:302px;font-size:11px;transform:scaleX(1.0109);color:#000">Affichage 001 (Géométrie)</span>
<span class="t" style="left:655.00px;top:488px;font-size:11px;transform:scaleX(1.0024);color:#000">Description de l'opérateur:</span>
<span class="t" style="left:655.20px;top:504px;font-size:11px;transform:scaleX(0.9801);color:#000">Vitesse en fonction de l'icône</span>
<span class="t" style="left:654.70px;top:517px;font-size:11px;transform:scaleX(0.9698);color:#000">utilise le mouvement de l'icône</span>
<span class="t" style="left:654.90px;top:530px;font-size:11px;transform:scaleX(0.9580);color:#000">comme modèle de vitesse de</span>
<span class="t" style="left:654.90px;top:543px;font-size:11px;transform:scaleX(1.0227);color:#000">particule.</span>
<span class="t" style="left:35.94px;top:492px;font-size:12px;transform:scaleX(0.9627);color:#000">Flux de valeurs prédéfinies</span>
<span class="t" style="left:35.94px;top:510px;font-size:12px;transform:scaleX(0.9642);color:#000">Flux mParticles</span>
<span class="t" style="left:35.94px;top:528px;font-size:12px;transform:scaleX(0.9886);color:#000">Flux vide</span>
<span class="t" style="left:35.94px;top:546px;font-size:12px;transform:scaleX(0.9675);color:#000">Flux standard</span>
<span class="t" style="left:35.94px;top:564px;font-size:12px;transform:scaleX(0.9584);color:#000">Flux UnClic</span>
<span class="t" style="left:35.94px;top:582px;font-size:12px;transform:scaleX(1.0130);color:#000">Etat initial</span>
<span class="t" style="left:35.94px;top:600px;font-size:12px;transform:scaleX(0.9577);color:#000">Fichier naissance</span>
<span class="t" style="left:35.94px;top:618px;font-size:12px;transform:scaleX(0.9847);color:#000">Flux d'émission de particules</span>
<span class="t" style="left:35.94px;top:636px;font-size:12px;transform:scaleX(0.9840);color:#000">Grille d'émission de particules</span>
<span class="t" style="left:35.94px;top:654px;font-size:12px;transform:scaleX(0.9775);color:#000">Grpe émission part.</span>
<span class="t" style="left:35.94px;top:672px;font-size:12px;transform:scaleX(0.9648);color:#000">Naissance</span>
<span class="t" style="left:220.55px;top:492px;font-size:12px;transform:scaleX(0.9515);color:#000">Peinture naissance</span>
<span class="t" style="left:220.55px;top:510px;font-size:12px;transform:scaleX(0.9635);color:#000">Script Naissance</span>
<span class="t" style="left:220.55px;top:528px;font-size:12px;transform:scaleX(0.9485);color:#000">Texture naissance</span>
<span class="t" style="left:220.55px;top:546px;font-size:12px;transform:scaleX(1.0058);color:#000">Arrêt</span>
<span class="t" style="left:220.55px;top:564px;font-size:12px;transform:scaleX(1.0375);color:#000">BlurWind*</span>
<span class="t" style="left:220.55px;top:582px;font-size:12px;transform:scaleX(0.9723);color:#000">Données prédéfinies</span>
<span class="t" style="left:220.55px;top:600px;font-size:12px;transform:scaleX(1.0077);color:#000">Dynamique matériau</span>
<span class="t" style="left:220.55px;top:618px;font-size:12px;transform:scaleX(0.9552);color:#000">Echelle</span>
<span class="t" style="left:220.55px;top:636px;font-size:12px;transform:scaleX(0.9750);color:#000">Force</span>
<span class="t" style="left:220.55px;top:654px;font-size:12px;transform:scaleX(1.0015);color:#000">Forme</span>
<span class="t" style="left:220.55px;top:672px;font-size:12px;transform:scaleX(0.9818);color:#000">Fréquence matériau</span>
<span class="t" style="left:359.64px;top:492px;font-size:12px;transform:scaleX(0.9593);color:#000">Garder à l'écart</span>
<span class="t" style="left:359.64px;top:510px;font-size:12px;transform:scaleX(0.9802);color:#000">IMBlur caméra</span>
<span class="t" style="left:359.64px;top:528px;font-size:12px;transform:scaleX(0.9754);color:#000">Icône de données</span>
<span class="t" style="left:359.64px;top:546px;font-size:12px;transform:scaleX(1.0084);color:#000">Icône de position</span>
<span class="t" style="left:359.64px;top:564px;font-size:12px;transform:scaleX(0.9923);color:#000">Instance de forme</span>
<span class="t" style="left:359.64px;top:582px;font-size:12px;transform:scaleX(1.0524);color:#000">Mapping</span>
<span class="t" style="left:359.64px;top:600px;font-size:12px;transform:scaleX(1.0315);color:#000">Marquer forme</span>
<span class="t" style="left:359.64px;top:618px;font-size:12px;transform:scaleX(0.9764);color:#000">Masquage caméra</span>
<span class="t" style="left:359.64px;top:636px;font-size:12px;transform:scaleX(0.9985);color:#000">Matériau statique</span>
<span class="t" style="left:359.64px;top:654px;font-size:12px;transform:scaleX(1.0198);color:#000">Objet de mapping</span>
<span class="t" style="left:359.64px;top:672px;font-size:12px;transform:scaleX(1.0174);color:#000">Objet de positionnement</span>
<span class="t" style="left:519.52px;top:492px;font-size:12px;transform:scaleX(0.9805);color:#000">Opérateur Script</span>
<span class="t" style="left:519.52px;top:510px;font-size:12px;transform:scaleX(0.9798);color:#000">Opérateur de données</span>
<span class="t" style="left:519.52px;top:528px;font-size:12px;transform:scaleX(1.0051);color:#000">Opérateur groupe</span>
<span class="t" style="left:519.52px;top:546px;font-size:12px;transform:scaleX(1.0389);color:#000">Orientation forme</span>
<span class="t" style="left:519.52px;top:564px;font-size:12px;transform:scaleX(0.9957);color:#000">Peinture emplacement</span>
<span class="t" style="left:519.52px;top:582px;font-size:12px;transform:scaleX(0.9922);color:#000">Random Walk*</span>
<span class="t" style="left:519.52px;top:600px;font-size:12px;transform:scaleX(1.0291);color:#000">Rotation</span>
<span class="t" style="left:519.52px;top:618px;font-size:12px;transform:scaleX(0.9276);color:#000">Rév</span>
<span class="t" style="left:519.52px;top:636px;font-size:12px;transform:scaleX(1.0443);color:#000">Spin Limit*</span>
<span class="t" style="left:519.52px;top:654px;font-size:12px;transform:scaleX(1.0051);color:#000">Supprimer</span>
<span class="t" style="left:519.52px;top:672px;font-size:12px;transform:scaleX(0.9923);color:#000">Sélection de groupe</span>
</body>
</html>
